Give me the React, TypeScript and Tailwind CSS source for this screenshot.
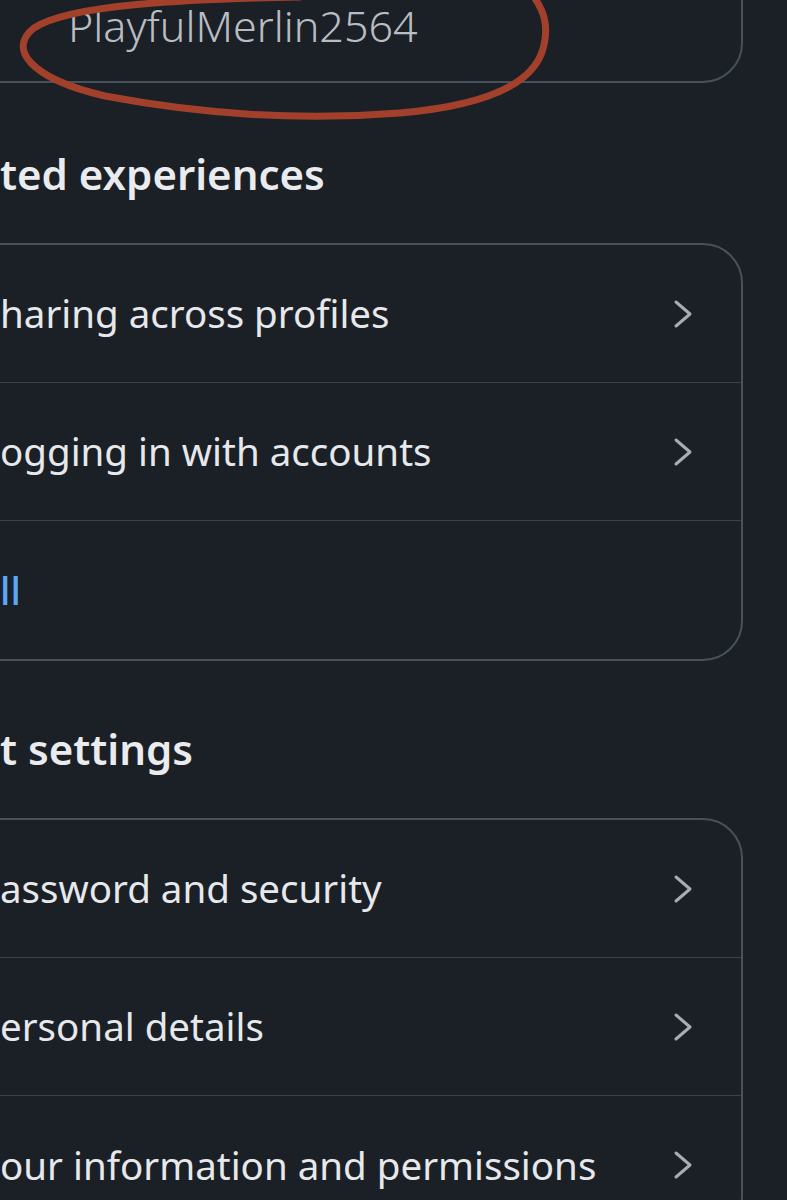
import { ReactNode } from "react";

const font = { fontFamily: '"Noto Sans", "Open Sans", sans-serif' };

function Chevron() {
  return (
    <svg width="20" height="30" viewBox="0 0 20 30" fill="none" className="shrink-0">
      <polyline
        points="3,3 17,15 3,27"
        stroke="#a9adb3"
        strokeWidth="3"
        strokeLinecap="round"
        strokeLinejoin="round"
      />
    </svg>
  );
}

function Row({ children, last, chevron = true }: { children: ReactNode; last?: boolean; chevron?: boolean }) {
  return (
    <div
      className={
        "flex h-[138px] items-center justify-between pl-[38px] pr-[48px] " +
        (last ? "" : "border-b-[1.5px] border-[#38424c]")
      }
    >
      {children}
      {chevron && <Chevron />}
    </div>
  );
}

function Heading({ children, top }: { children: ReactNode; top: string }) {
  return (
    <div className={top + " pb-[48px]"}>
      <h2 className="text-[42px] leading-none font-semibold text-[#e9ebee] whitespace-nowrap">{children}</h2>
    </div>
  );
}

export default function App() {
  return (
    <div className="relative h-[1200px] overflow-hidden bg-[#1b2026] pr-[44px]" style={font}>
      {/* profile card, mostly scrolled off */}
      <div className="-mt-[60px] -ml-[40px] rounded-[40px] border-2 border-[#47515b] pt-[62px] pb-[34px] pl-[106px]">
        <div className="text-[43px] leading-none font-light text-[#b9bdc3] whitespace-nowrap">PlayfulMerlin2564</div>
      </div>

      <Heading top="pt-[70px]">ted experiences</Heading>

      <div className="-ml-[40px] rounded-[40px] border-2 border-[#47515b]">
        <Row>
          <span className="text-[38.5px] leading-none text-[#e6e8eb] whitespace-nowrap">haring across profiles</span>
        </Row>
        <Row>
          <span className="text-[38.5px] leading-none text-[#e6e8eb] whitespace-nowrap">ogging in with accounts</span>
        </Row>
        <Row last chevron={false}>
          <span className="text-[38.5px] leading-none font-medium text-[#5aa8f6] whitespace-nowrap">ll</span>
        </Row>
      </div>

      <Heading top="pt-[67px]">t settings</Heading>

      <div className="-ml-[40px] rounded-[40px] border-2 border-[#47515b]">
        <Row>
          <span className="text-[38.5px] leading-none text-[#e6e8eb] whitespace-nowrap">assword and security</span>
        </Row>
        <Row>
          <span className="text-[38.5px] leading-none text-[#e6e8eb] whitespace-nowrap">ersonal details</span>
        </Row>
        <Row last>
          <span className="text-[38.5px] leading-none text-[#e6e8eb] whitespace-nowrap">our information and permissions</span>
        </Row>
      </div>

      {/* hand-drawn annotation */}
      <svg className="pointer-events-none absolute left-0 top-0" width="787" height="130" viewBox="0 0 787 130" fill="none">
        <path
          d="M 300 -3 C 190 -1 70 4 34 28 C 8 48 28 78 105 96 C 200 114 300 121 400 113 C 480 106 530 86 542 52 C 551 24 542 8 532 -6"
          stroke="#a3402c"
          strokeWidth="7"
          strokeLinecap="round"
        />
      </svg>
    </div>
  );
}
